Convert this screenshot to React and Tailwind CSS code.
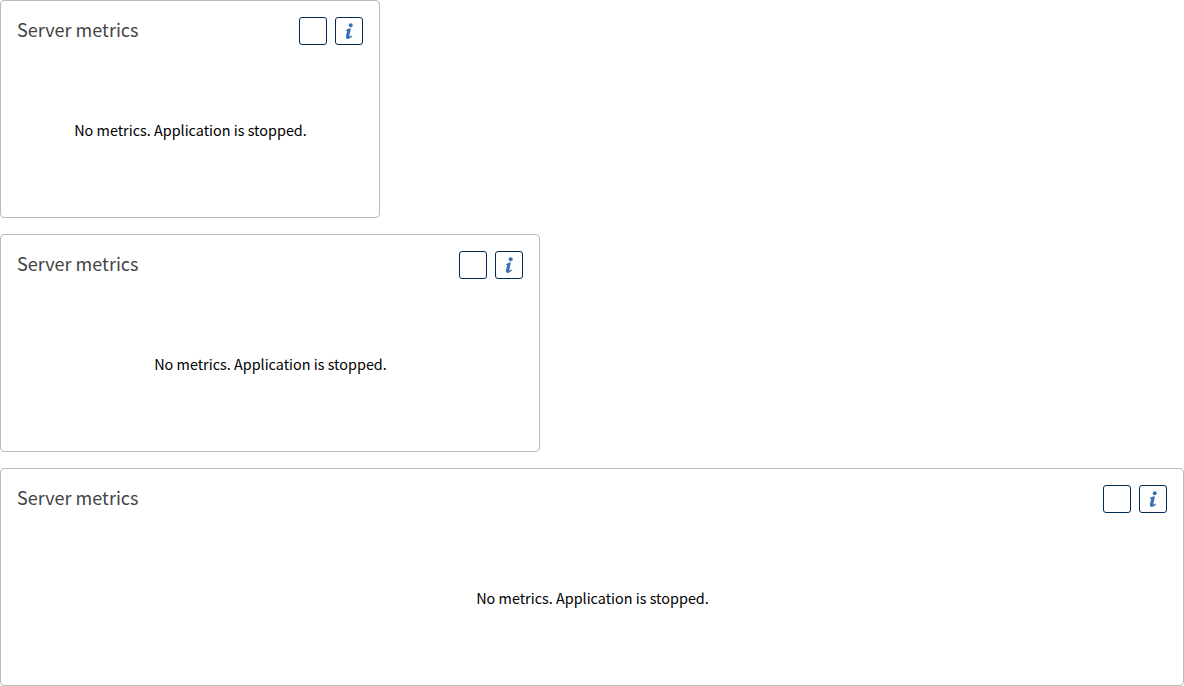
function InfoIcon() {
  return (
    <svg width="16" height="16" viewBox="0 0 16 16" aria-hidden="true">
      <circle cx="9.7" cy="2.2" r="2" fill="#3a6fb4" />
      <path
        d="M4.8 7.2C6.2 6.1 7.8 5.5 9.9 5.3L8.4 12.7C8.2 13.7 9 13.7 10.9 12.6L11.2 13.3C9.6 15.1 7.7 16 6.4 15.9C5.1 15.8 4.7 14.6 5 13.1L6 8.6C6.2 7.6 5.8 7.5 5 8Z"
        fill="#3a6fb4"
      />
    </svg>
  );
}

function IconButton({ children, label }) {
  return (
    <button
      aria-label={label}
      className="flex size-7 items-center justify-center rounded-[3px] border border-[#002b54] bg-white"
    >
      {children}
    </button>
  );
}

function MetricsCard({ className }) {
  return (
    <section
      className={`flex h-[218px] flex-col rounded border border-[#bbbbbb] bg-white p-4 ${className}`}
    >
      <header className="flex h-7 items-start justify-between">
        <h2 className="text-[18.05px] leading-6 text-[#444444]">Server metrics</h2>
        <div className="flex gap-2">
          <IconButton label="Refresh" />
          <IconButton label="Information">
            <InfoIcon />
          </IconButton>
        </div>
      </header>
      <div className="flex grow items-center justify-center pt-[14px] pl-px text-[14.4px] leading-6 text-black">
        No metrics. Application is stopped.
      </div>
    </section>
  );
}

export default function App() {
  return (
    <main className="flex flex-col gap-4 bg-white font-['Noto_Sans_CJK_SC','Noto_Sans',sans-serif]">
      <MetricsCard className="w-[380px]" />
      <MetricsCard className="w-[540px]" />
      <MetricsCard className="w-full" />
    </main>
  );
}
